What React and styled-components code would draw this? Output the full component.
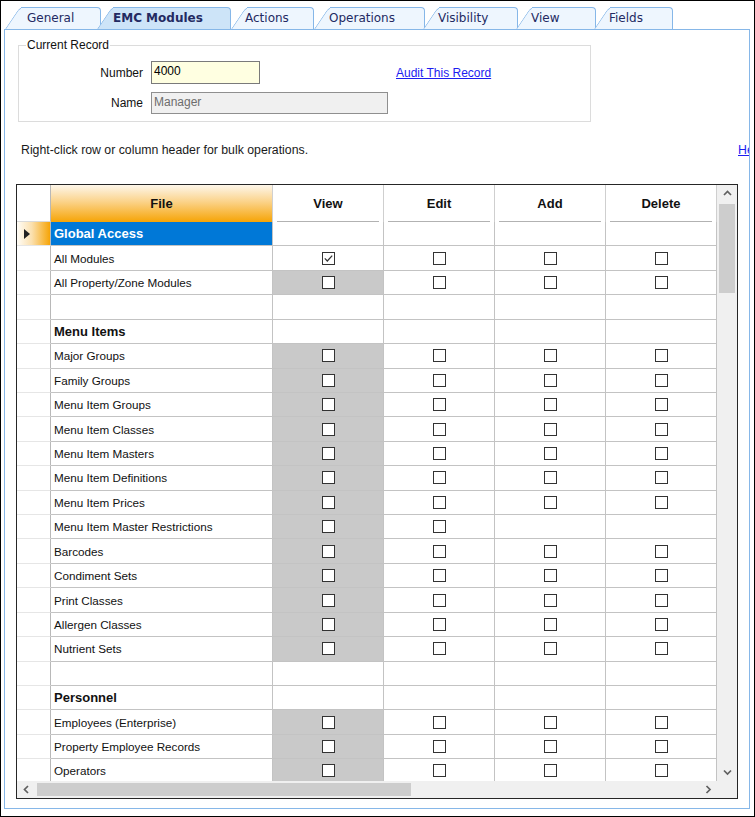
import React from "react";
import styled, { createGlobalStyle } from "styled-components";

const GlobalStyle = createGlobalStyle`
  html, body {
    margin: 0;
    padding: 0;
    background: #fff;
  }
  body {
    font-family: "Liberation Sans", Arial, sans-serif;
    font-size: 12px;
    color: #111;
  }
  * {
    box-sizing: border-box;
  }
`;

const BLUE_LINE = "#86b7e8";
const GRID_LINE = "#c3c3c3";

const Frame = styled.div`
  width: 755px;
  height: 817px;
  border: 1px solid #000;
  padding: 6px 4px 7px 3px;
  display: flex;
  flex-direction: column;
  background: #fff;
`;

const TabStrip = styled.div`
  display: flex;
  height: 22px;
  padding-left: 1px;
`;

const Tab = styled.div`
  position: relative;
  isolation: isolate;
  z-index: ${({ $active }) => ($active ? 2 : "auto")};
  width: ${({ $w }) => $w}px;
  height: 22px;
  margin-left: ${({ $ml }) => $ml}px;
  padding-left: ${({ $pl }) => $pl}px;
  font-family: "DejaVu Sans", Verdana, sans-serif;
  font-size: 12px;
  font-weight: ${({ $active }) => ($active ? 700 : 400)};
  line-height: 23px;
  color: #232a62;
  white-space: nowrap;

  &::before {
    content: "";
    position: absolute;
    left: 0;
    top: 0;
    bottom: 0;
    width: 26px;
    background: ${({ $active }) => ($active ? "#cde4f8" : "#eef6fe")};
    border-left: 1px solid ${BLUE_LINE};
    border-top: 1px solid ${BLUE_LINE};
    border-top-left-radius: 5px;
    transform-origin: bottom left;
    transform: skewX(-34deg);
  }
  &::after {
    content: "";
    position: absolute;
    left: 16px;
    right: 0;
    top: 0;
    bottom: 0;
    background: ${({ $active }) => ($active ? "#cde4f8" : "#eef6fe")};
    border-top: 1px solid ${BLUE_LINE};
    border-right: 1px solid ${BLUE_LINE};
    border-top-right-radius: 4px;
  }
`;

const TabLabel = styled.span`
  position: relative;
  z-index: 1;
`;

const Panel = styled.div`
  flex: 1;
  border: 1px solid ${BLUE_LINE};
  background: #fff;
  overflow: hidden;
  display: flex;
  flex-direction: column;
`;

const GroupBox = styled.div`
  position: relative;
  width: 573px;
  height: 77px;
  margin: 15px 0 0 13px;
  border: 1px solid #dcdcdc;
  padding-top: 15px;
`;

const Legend = styled.span`
  position: absolute;
  top: -8px;
  left: 7px;
  padding: 0 1px;
  background: #fff;
  line-height: 14px;
  color: #111;
`;

const FieldRow = styled.div`
  display: flex;
  align-items: center;
  margin-top: ${({ $mt }) => $mt || 0}px;
`;

const FieldLabel = styled.div`
  width: 124px;
  margin-right: 8px;
  text-align: right;
  color: #111;
`;

const TextBox = styled.div`
  width: ${({ $w }) => $w}px;
  height: ${({ $h }) => $h}px;
  padding: 2px 2px 0;
  border: 1px solid ${({ $disabled }) => ($disabled ? "#8f8f8f" : "#7a7a7a")};
  background: ${({ $disabled }) => ($disabled ? "#f0f0f0" : "#ffffe1")};
  color: ${({ $disabled }) => ($disabled ? "#6d6d6d" : "#000")};
  line-height: 14px;
`;

const Link = styled.a`
  color: #1c1cf0;
  text-decoration: underline;
  cursor: pointer;
  margin-left: ${({ $ml }) => $ml || 0}px;
  white-space: nowrap;
`;

const HintRow = styled.div`
  display: grid;
  grid-template-columns: 717px auto;
  padding-left: 16px;
  margin-top: 21px;
  line-height: 14px;
  font-size: 12.3px;
  color: #1a1a1a;
`;

const Grid = styled.div`
  width: 722px;
  height: 615px;
  margin: 27px 0 0 11px;
  border: 1px solid #262626;
  display: grid;
  grid-template-columns: 700px 20px;
  grid-template-rows: 596px 17px;
  background: #fff;
`;

const Viewport = styled.div`
  overflow: hidden;
`;

const Table = styled.div`
  display: grid;
  grid-template-columns: 34px 222px 111px 111px 111px 111px;
  grid-template-rows: 37px;
  grid-auto-rows: 24.43px;
`;

const CornerCell = styled.div`
  background: #fff;
  border-right: 1px solid #b8b8b8;
  border-bottom: 1px solid #dadada;
`;

const FileHead = styled.div`
  display: flex;
  align-items: center;
  justify-content: center;
  font-weight: 700;
  font-size: 13px;
  color: #111;
  background: linear-gradient(180deg, #fdf6ea 0%, #fbd38a 45%, #f6a406 100%);
  border-right: 1px solid #d0d0d0;
`;

const HeadCell = styled.div`
  position: relative;
  display: flex;
  align-items: center;
  justify-content: center;
  font-weight: 700;
  font-size: 13px;
  color: #111;
  background: #fff;
  border-right: 1px solid #cfcfcf;

  &::after {
    content: "";
    position: absolute;
    left: 4px;
    right: 4px;
    bottom: 0;
    height: 1px;
    background: #b2b2b2;
  }
`;

const RowHead = styled.div`
  display: flex;
  align-items: center;
  padding-left: 7px;
  border-right: 1px solid #b8b8b8;
  border-bottom: 1px solid #e6e6e6;
  background: ${({ $selected }) =>
    $selected ? "linear-gradient(90deg, #fffdf8 0%, #fbe0ae 45%, #f6a406 100%)" : "#fff"};
`;

const FileCell = styled.div`
  display: flex;
  align-items: center;
  padding-left: 3px;
  white-space: nowrap;
  overflow: hidden;
  border-right: 1px solid ${GRID_LINE};
  border-bottom: 1px solid ${GRID_LINE};
  background: ${({ $kind }) => ($kind === "selected" ? "#0078d7" : "#fff")};
  color: ${({ $kind }) => ($kind === "selected" ? "#fff" : "#111")};
  font-weight: ${({ $kind }) => ($kind === "selected" || $kind === "section" ? 700 : 400)};
  font-size: ${({ $kind }) => ($kind === "selected" || $kind === "section" ? "13px" : "11.7px")};
`;

const ValueCell = styled.div`
  display: flex;
  align-items: center;
  justify-content: center;
  border-right: 1px solid ${GRID_LINE};
  border-bottom: 1px solid ${GRID_LINE};
  background: ${({ $gray }) => ($gray ? "#c9c9c9" : "#fff")};
`;

const Box = styled.span`
  display: inline-flex;
  align-items: center;
  justify-content: center;
  width: 13px;
  height: 13px;
  border: 1px solid #333;
  background: #fff;
`;

const VScroll = styled.div`
  background: #f0f0f0;
  display: flex;
  flex-direction: column;
  align-items: center;
`;

const ArrowBox = styled.div`
  flex: 0 0 auto;
  width: ${({ $w }) => ($w ? `${$w}px` : "100%")};
  height: ${({ $h }) => ($h ? `${$h}px` : "100%")};
  display: flex;
  align-items: center;
  justify-content: center;
`;

const VThumb = styled.div`
  width: 16px;
  height: 89px;
  margin-top: 2px;
  background: #cdcdcd;
`;

const Filler = styled.div`
  flex: 1;
`;

const HScroll = styled.div`
  background: #f0f0f0;
  display: flex;
  align-items: center;
`;

const HThumb = styled.div`
  width: 374px;
  height: 13px;
  margin-left: 1px;
  background: #cdcdcd;
`;

const Corner = styled.div`
  background: #f0f0f0;
`;

const Chevron = ({ dir }) => {
  const paths = {
    up: "M1 5 L4.5 1.5 L8 5",
    down: "M1 1.5 L4.5 5 L8 1.5",
    left: "M5 1 L1.5 4.5 L5 8",
    right: "M1.5 1 L5 4.5 L1.5 8",
  };
  const horiz = dir === "up" || dir === "down";
  return (
    <svg width={horiz ? 9 : 7} height={horiz ? 7 : 9} viewBox={horiz ? "0 0 9 7" : "0 0 7 9"}>
      <path d={paths[dir]} fill="none" stroke="#606060" strokeWidth="1.7" />
    </svg>
  );
};

const Check = ({ checked }) => (
  <Box>
    {checked && (
      <svg width="11" height="11" viewBox="0 0 11 11">
        <path d="M1.8 5.4 L4.3 8 L9.2 2.6" fill="none" stroke="#333" strokeWidth="1.2" />
      </svg>
    )}
  </Box>
);

const TABS = [
  { label: "General", w: 96, ml: 0, pl: 22 },
  { label: "EMC Modules", w: 134, ml: -4, pl: 16, active: true },
  { label: "Actions", w: 83, ml: 0, pl: 14 },
  { label: "Operations", w: 111, ml: 0, pl: 15 },
  { label: "Visibility", w: 95, ml: -2, pl: 15 },
  { label: "View", w: 80, ml: -2, pl: 15 },
  { label: "Fields", w: 79, ml: -2, pl: 15 },
];

const full = (name) => ({ name, view: "gray", edit: true, add: true, del: true });

const ROWS = [
  { name: "Global Access", kind: "selected" },
  { name: "All Modules", view: "checked", edit: true, add: true, del: true },
  full("All Property/Zone Modules"),
  { name: "", kind: "blank" },
  { name: "Menu Items", kind: "section" },
  full("Major Groups"),
  full("Family Groups"),
  full("Menu Item Groups"),
  full("Menu Item Classes"),
  full("Menu Item Masters"),
  full("Menu Item Definitions"),
  full("Menu Item Prices"),
  { name: "Menu Item Master Restrictions", view: "gray", edit: true },
  full("Barcodes"),
  full("Condiment Sets"),
  full("Print Classes"),
  full("Allergen Classes"),
  full("Nutrient Sets"),
  { name: "", kind: "blank" },
  { name: "Personnel", kind: "section" },
  full("Employees (Enterprise)"),
  full("Property Employee Records"),
  full("Operators"),
];

const Triangle = () => (
  <svg width="6" height="10" viewBox="0 0 6 10">
    <polygon points="0,0 6,5 0,10" fill="#222" />
  </svg>
);

const App = () => {
  return (
    <>
      <GlobalStyle />
      <Frame>
        <TabStrip>
          {TABS.map((t) => (
            <Tab key={t.label} $w={t.w} $ml={t.ml} $pl={t.pl} $active={t.active}>
              <TabLabel>{t.label}</TabLabel>
            </Tab>
          ))}
        </TabStrip>
        <Panel>
          <GroupBox>
            <Legend>Current Record</Legend>
            <FieldRow>
              <FieldLabel>Number</FieldLabel>
              <TextBox $w={109} $h={23}>4000</TextBox>
              <Link $ml={136}>Audit This Record</Link>
            </FieldRow>
            <FieldRow $mt={8}>
              <FieldLabel>Name</FieldLabel>
              <TextBox $w={237} $h={22} $disabled>
                Manager
              </TextBox>
            </FieldRow>
          </GroupBox>

          <HintRow>
            <span>Right-click row or column header for bulk operations.</span>
            <Link>Help</Link>
          </HintRow>

          <Grid>
            <Viewport>
              <Table>
                <CornerCell />
                <FileHead>File</FileHead>
                <HeadCell>View</HeadCell>
                <HeadCell>Edit</HeadCell>
                <HeadCell>Add</HeadCell>
                <HeadCell>Delete</HeadCell>
                {ROWS.map((r, i) => (
                  <React.Fragment key={i}>
                    <RowHead $selected={r.kind === "selected"}>
                      {r.kind === "selected" && <Triangle />}
                    </RowHead>
                    <FileCell $kind={r.kind}>{r.name}</FileCell>
                    <ValueCell $gray={r.view === "gray"}>
                      {r.view && <Check checked={r.view === "checked"} />}
                    </ValueCell>
                    <ValueCell>{r.edit && <Check />}</ValueCell>
                    <ValueCell>{r.add && <Check />}</ValueCell>
                    <ValueCell>{r.del && <Check />}</ValueCell>
                  </React.Fragment>
                ))}
              </Table>
            </Viewport>
            <VScroll>
              <ArrowBox $h={17}>
                <Chevron dir="up" />
              </ArrowBox>
              <VThumb />
              <Filler />
              <ArrowBox $h={17}>
                <Chevron dir="down" />
              </ArrowBox>
            </VScroll>
            <HScroll>
              <ArrowBox $w={19}>
                <Chevron dir="left" />
              </ArrowBox>
              <HThumb />
              <Filler />
              <ArrowBox $w={17}>
                <Chevron dir="right" />
              </ArrowBox>
            </HScroll>
            <Corner />
          </Grid>
        </Panel>
      </Frame>
    </>
  );
};

export default App;
